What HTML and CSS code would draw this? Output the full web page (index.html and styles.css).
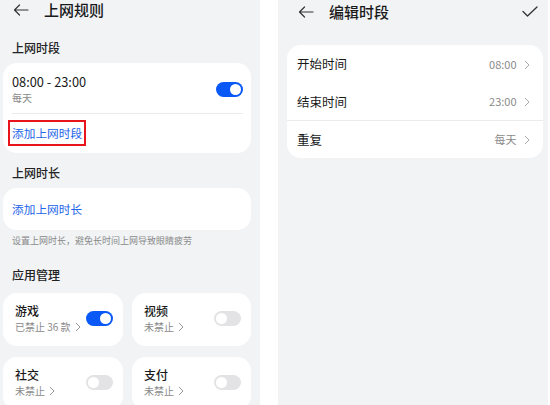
FILE: index.html
```html
<!DOCTYPE html>
<html lang="zh-CN">
<head>
  <meta charset="UTF-8" />
  <title>上网规则</title>
  <link rel="stylesheet" href="styles.css">
</head>
<body>

  <!-- 上网规则 -->
  <div class="phone left">
    <div class="header">
      <svg class="back" width="16" height="12" viewBox="0 0 16 12"><path d="M15 6H1.5M6.5 1 1.5 6l5 5" fill="none" stroke="#333" stroke-width="1.2" stroke-linecap="round" stroke-linejoin="round"/></svg>
      <span class="title">上网规则</span>
    </div>

    <div class="label first">上网时段</div>
    <div class="card">
      <div class="period">
        <div>
          <div class="main">08:00 - 23:00</div>
          <div class="sub">每天</div>
        </div>
        <span class="toggle on"></span>
      </div>
      <div class="link-row"><span class="link marked">添加上网时段</span></div>
    </div>

    <div class="label">上网时长</div>
    <div class="card single"><span class="link">添加上网时长</span></div>
    <div class="hint">设置上网时长，避免长时间上网导致眼睛疲劳</div>

    <div class="label apps">应用管理</div>
    <div class="grid">
      <div class="app">
        <div>
          <div class="name">游戏</div>
          <div class="sub">已禁止 36 款 <svg class="chev" width="6" height="10" viewBox="0 0 6 10"><path d="M1 1l4 4-4 4" fill="none" stroke="#999" stroke-width="1"/></svg></div>
        </div>
        <span class="toggle on"></span>
      </div>
      <div class="app">
        <div>
          <div class="name">视频</div>
          <div class="sub">未禁止 <svg class="chev" width="6" height="10" viewBox="0 0 6 10"><path d="M1 1l4 4-4 4" fill="none" stroke="#999" stroke-width="1"/></svg></div>
        </div>
        <span class="toggle"></span>
      </div>
      <div class="app">
        <div>
          <div class="name">社交</div>
          <div class="sub">未禁止 <svg class="chev" width="6" height="10" viewBox="0 0 6 10"><path d="M1 1l4 4-4 4" fill="none" stroke="#999" stroke-width="1"/></svg></div>
        </div>
        <span class="toggle"></span>
      </div>
      <div class="app">
        <div>
          <div class="name">支付</div>
          <div class="sub">未禁止 <svg class="chev" width="6" height="10" viewBox="0 0 6 10"><path d="M1 1l4 4-4 4" fill="none" stroke="#999" stroke-width="1"/></svg></div>
        </div>
        <span class="toggle"></span>
      </div>
    </div>
  </div>

  <!-- 编辑时段 -->
  <div class="phone right">
    <div class="header tall">
      <svg class="back" width="16" height="12" viewBox="0 0 16 12"><path d="M15 6H1.5M6.5 1 1.5 6l5 5" fill="none" stroke="#333" stroke-width="1.2" stroke-linecap="round" stroke-linejoin="round"/></svg>
      <span class="title">编辑时段</span>
      <svg class="check" width="16" height="12" viewBox="0 0 16 12"><path d="M1 5.5 5.5 10 15 1" fill="none" stroke="#333" stroke-width="1.3" stroke-linecap="round" stroke-linejoin="round"/></svg>
    </div>

    <div class="card list">
      <div class="row">
        <span>开始时间</span>
        <span class="value">08:00 <svg class="chev" width="6" height="10" viewBox="0 0 6 10"><path d="M1 1l4 4-4 4" fill="none" stroke="#aaa" stroke-width="1"/></svg></span>
      </div>
      <div class="row">
        <span>结束时间</span>
        <span class="value">23:00 <svg class="chev" width="6" height="10" viewBox="0 0 6 10"><path d="M1 1l4 4-4 4" fill="none" stroke="#aaa" stroke-width="1"/></svg></span>
      </div>
      <div class="row">
        <span>重复</span>
        <span class="value">每天 <svg class="chev" width="6" height="10" viewBox="0 0 6 10"><path d="M1 1l4 4-4 4" fill="none" stroke="#aaa" stroke-width="1"/></svg></span>
      </div>
    </div>
  </div>

</body>
</html>
```

FILE: styles.css
```css
/* Reset */
* {
  margin: 0;
  padding: 0;
  box-sizing: border-box;
}
body {
  font-family: "Noto Sans CJK SC", "Noto Sans", sans-serif;
  background: #fff;
  color: #191919;
  width: 550px;
  height: 405px;
  overflow: hidden;
  display: flex;
  gap: 18px;
}

/* Telas */
.phone {
  background: #f1f3f5;
  height: 405px;
}
.left {
  width: 260px;
  padding: 0 9px 0 3px;
}
.right {
  width: 270px;
  padding: 0 5px 0 9px;
}

/* Cabeçalho */
.header {
  height: 20px;
  display: flex;
  align-items: center;
  padding-left: 10px;
}
.header.tall {
  height: 24px;
  padding: 0 5px 0 11px;
}
.back {
  flex: none;
}
.title {
  font-size: 15px;
  font-weight: 500;
  line-height: 20px;
  margin-left: 15px;
  color: #1a1a1a;
}
.check {
  margin-left: auto;
}

/* Títulos de seção */
.label {
  font-size: 12px;
  font-weight: 500;
  line-height: 16px;
  padding-left: 9px;
  margin: 12px 0 7px;
  color: #222;
}
.label.first {
  margin-top: 20px;
}
.label.apps {
  margin: 19px 0 10px;
}

/* Cartões */
.card {
  background: #fff;
  border-radius: 14px;
}
.period {
  display: flex;
  align-items: center;
  justify-content: space-between;
  margin: 0 8px 0 9px;
  padding: 10px 0 8px;
  border-bottom: 1px solid #ececec;
}
.main {
  font-size: 12.8px;
  line-height: 18px;
}
.sub {
  font-size: 10px;
  line-height: 14px;
  color: #8a8a8a;
}
.link-row {
  padding: 5px 0 7px 5px;
}
.link {
  font-size: 11.7px;
  line-height: 18px;
  color: #2265e8;
}
.link.marked {
  display: inline-block;
  padding: 2px;
  border: 2px solid #e8141c;
}
.single {
  height: 42px;
  display: flex;
  align-items: center;
  padding-left: 9px;
}
.hint {
  font-size: 9px;
  line-height: 14px;
  color: #8a8a8a;
  padding-left: 9px;
  margin-top: 4px;
}

/* Interruptores */
.toggle {
  width: 27px;
  height: 15px;
  border-radius: 8px;
  background: #e3e3e5;
  position: relative;
  flex: none;
}
.toggle::after {
  content: "";
  position: absolute;
  top: 2px;
  left: 2px;
  width: 11px;
  height: 11px;
  border-radius: 50%;
  background: #fff;
}
.toggle.on {
  background: #0a59f7;
}
.toggle.on::after {
  left: 14px;
}

/* Gestão de apps */
.grid {
  display: grid;
  grid-template-columns: 120px 119px;
  gap: 11px 9px;
}
.app {
  background: #fff;
  border-radius: 14px;
  height: 53px;
  display: flex;
  align-items: center;
  justify-content: space-between;
  padding: 0 10px 2px 12px;
}
.name {
  font-size: 12px;
  font-weight: 500;
  line-height: 16px;
  margin-bottom: 1px;
}
.chev {
  vertical-align: -1px;
  margin-left: 2px;
}

/* Lista de edição */
.list {
  margin-top: 21px;
}
.row {
  height: 37.5px;
  display: flex;
  align-items: center;
  justify-content: space-between;
  padding: 0 13px 0 10px;
  font-size: 12.5px;
}
.row + .row + .row {
  border-top: 1px solid #ececec;
}
.value {
  font-size: 11px;
  color: #8a8a8a;
}
.value .chev {
  margin-left: 5px;
}
```
